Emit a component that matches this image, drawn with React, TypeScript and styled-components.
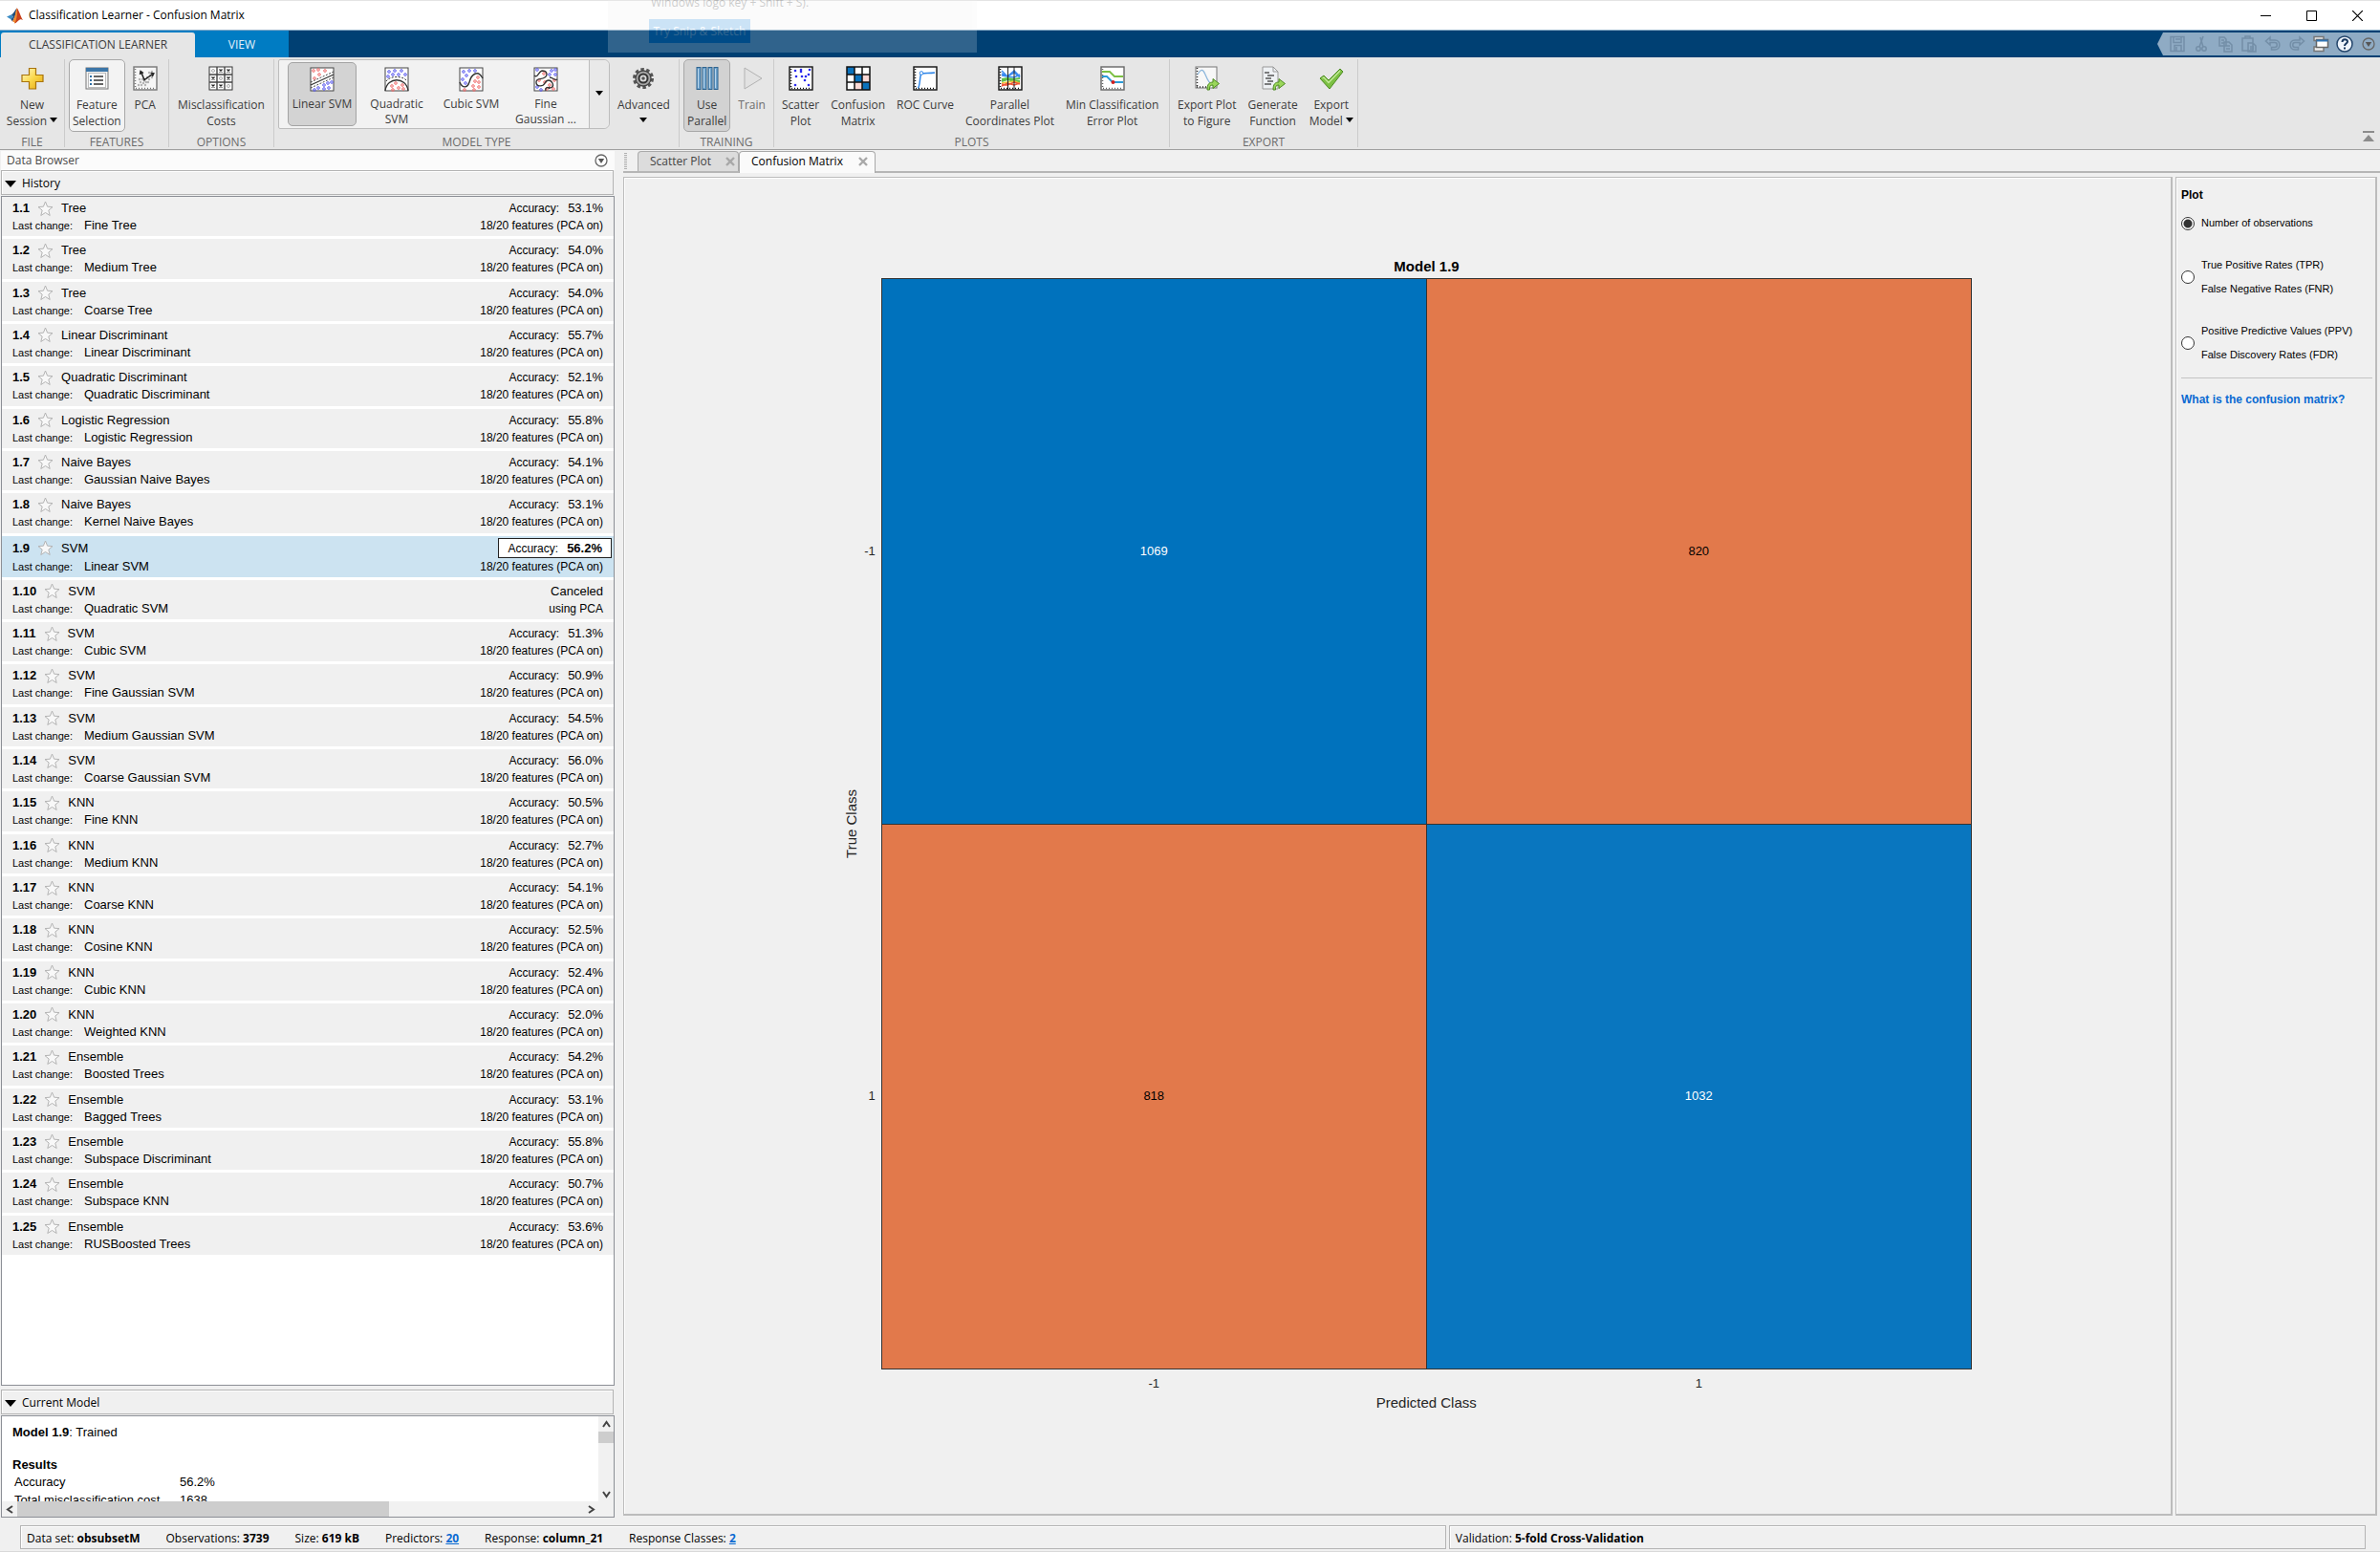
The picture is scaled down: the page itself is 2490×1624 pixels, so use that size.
import React from "react";
import styled, { createGlobalStyle } from "styled-components";

const UI = `"Open Sans", "Noto Sans", sans-serif`;
const ARIAL = `"Liberation Sans", Arial, sans-serif`;

const GlobalStyle = createGlobalStyle`
  *, *::before, *::after { box-sizing: border-box; }
  body { margin: 0; background: #f0f0f0; }
  button { font: inherit; color: inherit; border: 0; background: none; padding: 0; }
  ol, h1, h2, h3, p { margin: 0; padding: 0; font: inherit; }
  svg { display: block; flex: none; }
`;

const Window = styled.div`
  display: flex;
  flex-direction: column;
  height: 100vh;
  overflow: hidden;
  background: #f0f0f0;
  color: #000;
  font: 12px/16px ${UI};
`;

/* ---------- title bar ---------- */
const TitleBar = styled.header`
  display: flex;
  align-items: center;
  height: 32px;
  padding-left: 7px;
  gap: 6px;
  background: #fff;
  border-top: 1px solid #e4e4e4;
  border-bottom: 1px solid #8fafc9;
`;
const Title = styled.h1`
  flex: 1;
  white-space: nowrap;
`;
const CaptionButtons = styled.div`
  display: flex;
`;
const CaptionButton = styled.button`
  display: grid;
  place-items: center;
  width: 48px;
  height: 30px;
`;

/* ---------- tool strip tabs ---------- */
const TabStrip = styled.nav`
  display: flex;
  align-items: stretch;
  justify-content: space-between;
  height: 28px;
  background: #004073;
`;
const TabGroup = styled.div`
  display: flex;
  align-items: flex-end;
  padding-left: 1px;
  background: #007cc3;
`;
const StripTab = styled.button<{ $active?: boolean }>`
  width: ${(p) => (p.$active ? 203 : 98)}px;
  height: 26px;
  border-radius: 3px 3px 0 0;
  background: ${(p) => (p.$active ? "#e6e6e6" : "transparent")};
  color: ${(p) => (p.$active ? "#3c3c3c" : "#e4f1fa")};
`;
const QuickAccess = styled.div`
  display: flex;
  align-items: center;
  margin: 2px 0;
  padding-left: 8px;
  background: #8fabc4;
  clip-path: polygon(6px 0, 100% 0, 100% 100%, 6px 100%, 0 50%);
`;
const QuickButton = styled.button<{ $dim?: boolean }>`
  display: grid;
  place-items: center;
  width: 25px;
  height: 24px;
  opacity: ${(p) => (p.$dim ? 0.5 : 1)};
`;

/* ---------- tool strip ---------- */
const Ribbon = styled.div`
  display: flex;
  height: 97px;
  padding-top: 2px;
  background: #e6e6e6;
  border-bottom: 1px solid #a0a0a0;
  color: #3c3c3c;
`;
const Section = styled.section<{ $width: number }>`
  display: flex;
  flex-direction: column;
  flex: none;
  width: ${(p) => p.$width}px;
  height: 92px;
  border-right: 1px solid #cbcbcb;
`;
const Tools = styled.div<{ $center?: boolean }>`
  display: flex;
  flex: none;
  gap: 4px;
  height: 79px;
  padding: 0 4px;
  justify-content: ${(p) => (p.$center ? "center" : "flex-start")};
`;
const SectionName = styled.h2`
  text-align: center;
  color: #6b6b6b;
`;
const ToolButton = styled.button<{ $look?: "boxed" | "pressed"; $dim?: boolean }>`
  display: flex;
  flex-direction: column;
  align-items: center;
  gap: 6px;
  height: 76px;
  padding: 6px 3px 0;
  line-height: 17px;
  white-space: nowrap;
  border: 1px solid ${(p) => (p.$look ? "#a8a8a8" : "transparent")};
  border-radius: 5px;
  background: ${(p) => (p.$look === "boxed" ? "#f3f3f3" : p.$look === "pressed" ? "#d2d2d2" : "transparent")};
  color: ${(p) => (p.$dim ? "#6e6e6e" : "inherit")};
`;
const Caret = styled.i<{ $alone?: boolean }>`
  display: inline-block;
  margin-left: ${(p) => (p.$alone ? 0 : 3)}px;
  vertical-align: 3px;
  border: 4px solid transparent;
  border-top: 5px solid #000;
  border-bottom: 0;
`;
const Gallery = styled.div`
  display: flex;
  height: 73px;
  width: 347px;
  flex: none;
  border: 1px solid #bdbdbd;
  border-radius: 2px 6px 6px 2px;
  background: #f2f2f2;
`;
const GalleryItems = styled.div`
  display: flex;
  flex: 1;
  gap: 6px;
  padding: 2px 0 0 9px;
`;
const GalleryItem = styled.button<{ $on?: boolean }>`
  display: flex;
  flex-direction: column;
  align-items: center;
  gap: 5px;
  width: 72px;
  height: 67px;
  padding-top: 4px;
  line-height: 16px;
  border: 1px solid ${(p) => (p.$on ? "#a4a4a4" : "transparent")};
  border-radius: 5px;
  background: ${(p) => (p.$on ? "#d3d3d3" : "transparent")};
  white-space: nowrap;
`;
const GalleryMore = styled.button`
  width: 21px;
  border-left: 1px solid #bdbdbd;
  border-radius: 0 6px 6px 0;
  background: #e9e9e9;
`;
const Minimize = styled.button`
  align-self: flex-end;
  margin: 0 6px 8px auto;
`;

/* ---------- body ---------- */
const Body = styled.main`
  display: flex;
  flex: 1;
  min-height: 0;
  padding-top: 1px;
`;
const Browser = styled.aside`
  display: flex;
  flex-direction: column;
  flex: none;
  width: 643px;
  padding-bottom: 7px;
`;
const BrowserHead = styled.div`
  display: flex;
  align-items: center;
  justify-content: space-between;
  height: 20px;
  margin-left: 1px;
  padding: 0 7px 0 6px;
  background: #fbfbfb;
  color: #4a4a4a;
`;
const GroupHead = styled.h2`
  display: flex;
  align-items: center;
  gap: 6px;
  flex: none;
  height: 26px;
  margin: 0 1px 1px;
  padding: 2px 0 0 3px;
  border: 1px solid #b4b4b4;
  box-shadow: inset 1px 1px #fff;
`;
const Disclosure = styled.i`
  border: 6px solid transparent;
  border-top: 7px solid #000;
  border-bottom: 0;
`;
const HistoryBox = styled.div`
  flex: 1;
  min-height: 0;
  margin: 0 0 4px 1px;
  border: 1px solid #8c8f96;
  background: #fff;
  overflow: hidden;
`;
const HistoryList = styled.ol`
  display: flex;
  flex-direction: column;
  gap: 3px;
  min-height: 1107px;
  list-style: none;
  font-family: ${ARIAL};
`;
const Entry = styled.li<{ $selected?: boolean }>`
  flex: 1 1 auto;
  padding: 3px 11px 2px;
  background: ${(p) => (p.$selected ? "#cce3f1" : "#f0f0f0")};
`;
const EntryLine = styled.div<{ $tall?: boolean }>`
  display: flex;
  align-items: center;
  justify-content: space-between;
  height: ${(p) => (p.$tall ? 20 : 18)}px;
`;
const Side = styled.span<{ $gap: number }>`
  display: flex;
  align-items: center;
  gap: ${(p) => p.$gap}px;
`;
const Small = styled.span`
  font-size: 11px;
`;
const Label = styled.span`
  font-size: 12px;
`;
const Value = styled.span<{ $bold?: boolean }>`
  font-size: 13px;
  font-weight: ${(p) => (p.$bold ? 700 : 400)};
`;
const BestScore = styled.span`
  display: flex;
  align-items: center;
  gap: 9px;
  height: 21px;
  margin-right: -9px;
  padding: 0 9px;
  border: 1px solid #222;
  background: #fff;
`;

const ModelBox = styled.div`
  display: grid;
  grid-template: 1fr 16px / 1fr 16px;
  flex: none;
  height: 107px;
  margin-left: 1px;
  border: 1px solid #8c8f96;
  background: #fff;
`;
const ModelText = styled.div`
  overflow: hidden;
  padding: 8px 11px 0;
  font: 13px/17px ${ARIAL};
`;
const ResultsTitle = styled.h3`
  margin-top: 17px;
  font-weight: 700;
`;
const Results = styled.table`
  border-spacing: 0;
  line-height: 19px;
  th, td { padding: 0 0 0 2px; font-weight: 400; text-align: left; }
  th { width: 173px; }
`;
const ScrollBar = styled.div<{ $across?: boolean }>`
  display: flex;
  flex-direction: ${(p) => (p.$across ? "row" : "column")};
  background: #f1f1f1;
`;
const ScrollArrow = styled.button`
  display: grid;
  place-items: center;
  width: 16px;
  height: 16px;
`;
const Thumb = styled.div<{ $across?: boolean }>`
  flex: none;
  width: ${(p) => (p.$across ? "389px" : "16px")};
  height: ${(p) => (p.$across ? "16px" : "12px")};
  background: #cdcdcd;
`;
const Spacer = styled.div`
  flex: 1;
`;

/* ---------- documents ---------- */
const Documents = styled.section`
  display: flex;
  flex-direction: column;
  flex: 1;
  min-width: 0;
  padding: 0 3px 9px 9px;
`;
const DocTabs = styled.div`
  display: flex;
  height: 23px;
  margin-right: -3px;
  border-bottom: 2px solid #b6b6b6;
`;
const Grip = styled.i`
  width: 3px;
  height: 17px;
  margin: 2px 11px 0 1px;
  background: repeating-linear-gradient(#b0b0b0 0 1px, transparent 1px 2px);
`;
const DocTab = styled.div<{ $active?: boolean }>`
  display: flex;
  align-items: center;
  justify-content: space-between;
  width: ${(p) => (p.$active ? 143 : 106)}px;
  height: ${(p) => (p.$active ? 23 : 21)}px;
  padding: 0 ${(p) => (p.$active ? "7px 2px" : "3px 0")} 12px;
  border: 1px solid #a9a9a9;
  border-bottom: 0;
  border-radius: 4px 4px 0 0;
  background: ${(p) => (p.$active ? "#fafafa" : "#dcdcdc")};
  color: ${(p) => (p.$active ? "#000" : "#444")};
`;
const Panes = styled.div`
  display: flex;
  flex: 1;
  min-height: 0;
  gap: 3px;
  margin-top: 4px;
`;
const PlotPane = styled.div`
  display: flex;
  align-items: center;
  justify-content: center;
  flex: 1;
  padding: 0 0 26px 19px;
  border: 1px solid #bcbcbc;
  border-right-width: 2px;
  border-bottom-width: 2px;
  box-shadow: inset 1px 1px #fff;
`;
const Matrix = styled.table`
  border-collapse: collapse;
  font: 13px/16px ${ARIAL};
  color: #262626;
  th, td { padding: 0; font-weight: 400; }
`;
const MatrixTitle = styled.caption`
  font: 700 15px/25px ${ARIAL};
  color: #000;
  padding-left: 42px;
`;
const Cell = styled.td<{ $hit?: boolean; $tone?: string }>`
  width: 35.1vh;
  height: 35.1vh;
  text-align: center;
  border: 1px solid #333;
  background: ${(p) => p.$tone};
  color: ${(p) => (p.$hit ? "#fff" : "#000")};
`;
const AxisSide = styled.th`
  width: 22px;
  font-size: 15px !important;
  div { width: 22px; line-height: 22px; writing-mode: vertical-rl; transform: rotate(180deg); margin: 0 auto; }
`;
const RowTick = styled.th`
  width: 20px;
  padding-right: 6px !important;
  text-align: right;
`;
const ColTick = styled.th`
  height: 25px;
  padding: 7px 0 2px !important;
`;
const AxisBottom = styled.th`
  height: 20px;
  font-size: 15px;
`;

const OptionsPane = styled.fieldset`
  flex: none;
  width: 211px;
  min-width: 0;
  margin: 0;
  padding: 10px 3px 0 5px;
  border: 1px solid #bcbcbc;
  border-right-width: 2px;
  border-bottom-width: 2px;
  box-shadow: inset 1px 1px #fff;
  font: 11px/25px ${ARIAL};
`;
const OptionsTitle = styled.h2`
  margin-bottom: 9px;
  font-size: 12px;
  line-height: 16px;
  font-weight: 700;
`;
const Option = styled.label`
  display: flex;
  align-items: center;
  gap: 7px;
  margin-bottom: 19px;
  white-space: nowrap;
`;
const Radio = styled.input`
  appearance: none;
  flex: none;
  width: 14px;
  height: 14px;
  margin: 0;
  border: 1px solid #333;
  border-radius: 50%;
  background: #fff;
  &:checked { background: radial-gradient(#333 0 4px, #fff 5px); }
`;
const Rule = styled.hr`
  margin: -8px 0 14px;
  border: 0;
  border-top: 1px solid #c4c4c4;
`;
const HelpLink = styled.a`
  display: block;
  font-size: 12px;
  line-height: 16px;
  font-weight: 700;
  color: #0a6ad2;
  text-decoration: none;
`;

/* ---------- status bar ---------- */
const StatusBar = styled.footer`
  display: flex;
  gap: 3px;
  height: 29px;
  padding: 1px 15px 2px 21px;
  border-bottom: 1px solid #d9d9d9;
`;
const StatusBox = styled.div<{ $grow: number }>`
  display: flex;
  align-items: center;
  flex: ${(p) => p.$grow} 1 0;
  gap: 27px;
  height: 25px;
  padding: 2px 0 0 6px;
  border: 1px solid #b4b4b4;
  box-shadow: inset 1px 1px #fff;
  white-space: nowrap;
  a { color: #0a6ad2; }
`;

/* ---------- fading notification ---------- */
const Toast = styled.div`
  position: absolute;
  top: 0;
  left: 636px;
  width: 386px;
  height: 55px;
  padding-left: 43px;
  overflow: hidden;
  opacity: 0.2;
  background: #f0f0f0;
  pointer-events: none;
  font: 12px/16px ${UI};
  p { margin: -5px 0 9px 2px; }
  button { width: 106px; height: 25px; background: #0078d7; color: #fff; }
`;

/* ---------- icons ---------- */
type Kids = { children: React.ReactNode; size?: number };
const Ico = ({ children, size = 26 }: Kids) => (
  <svg width={size} height={size} viewBox="0 0 26 26" fill="none" aria-hidden="true">{children}</svg>
);
const Dots = ({ pts, color, r = 1.3 }: { pts: number[][]; color: string; r?: number }) => (
  <g stroke={color} strokeWidth="1">{pts.map(([x, y], i) => <circle key={i} cx={x} cy={y} r={r} />)}</g>
);
const Frame = ({ dark = "#444" }: { dark?: string }) => (
  <rect x="1" y="1" width="24" height="24" fill="#fff" stroke={dark} />
);
const Ticked = ({ dark = "#111", fill = "#fff" }: { dark?: string; fill?: string }) => (
  <>
    <rect x="1" y="1" width="24" height="24" fill={fill} stroke={dark} strokeWidth="1.4" />
    <path d="M2.5 3v21M3 23.5h21" stroke={dark} strokeWidth="1.6" strokeDasharray="1 2" />
  </>
);
const RED = "#f06a6a";
const BLUE = "#5a5af0";
const GREEN = "#7cc043";

const Logo = () => (
  <svg width="17" height="17" viewBox="0 0 17 17" aria-hidden="true">
    <path d="M0 9.5 5 7.3l2 2.2-2.6 2.8z" fill="#3c8dc5" />
    <path d="M5 7.3C7 6.5 8.5 3 10.5.5L9 8l-3 6.5-1.6-2.2L7 9.5z" fill="#1f4e79" />
    <path d="M10.5.5C12.500 1 14.500 10 17 13c-2-1.500-3.500-.8-5 .8-1 1.200-2 2.200-3.500 2.700C8 15 7 14 6 14.500 9 11 9.500 4 10.500.5z" fill="#c8401c" />
    <path d="M10.500.5C11.500 4 11 11 8.500 16.500 8 15 7 14 6 14.500 9 11 9.500 4 10.500.5z" fill="#f08c2e" />
  </svg>
);
const PlusIcon = () => (
  <Ico>
    <defs><linearGradient id="gold" x1="0" y1="0" x2="1" y2="1"><stop offset="0" stopColor="#fffbd0" /><stop offset=".5" stopColor="#fbd84b" /><stop offset="1" stopColor="#e3a50f" /></linearGradient></defs>
    <path d="M9.500 2.500h7v7h7.500v7h-7.500v7.500h-7v-7.500H2v-7h7.500z" fill="url(#gold)" stroke="#a8730c" strokeWidth="1.200" />
  </Ico>
);
const ListIcon = () => (
  <Ico>
    <rect x="2" y="2" width="23" height="22" fill="#f4f4f4" stroke="#777" />
    <rect x="2" y="2" width="23" height="4" fill="#3c76a8" />
    <rect x="4.500" y="7.500" width="18" height="15" fill="#fff" stroke="#bbb" />
    <path d="M10 11h10M10 15h10M10 19h10" stroke="#333" strokeWidth="1.500" />
    <path d="M6 11h2M6 15h2M6 19h2" stroke="#2b6ca3" strokeWidth="2" />
  </Ico>
);
const PcaIcon = () => (
  <Ico>
    <Ticked dark="#777" fill="#f6f6f6" />
    <g fill="#b4b4b4">{[[6, 20], [8, 17], [9, 20], [11, 18], [12, 15.500], [14, 17], [10, 14], [15, 12], [17, 14], [18, 10], [20, 12], [7, 14], [13, 20], [16, 17], [20, 6], [17, 7]].map(([x, y], i) => <circle key={i} cx={x} cy={y} r="1.200" />)}</g>
    <path d="M21.500 8 12 14.500 8.500 6M7.500 9l.6-3.500L11 7.500M18.500 7.500l3.300.3-1.500 3" stroke="#222" strokeWidth="1.500" />
  </Ico>
);
const CostsIcon = () => (
  <Ico>
    <Frame dark="#333" />
    <path d="M9 1v24M17 1v24M1 9h24M1 17h24" stroke="#444" strokeWidth="1.400" />
    <path d="m11.500 3.500 3 3m0-3-3 3M19.500 3.500l3 3m0-3-3 3M3.500 11.500l3 3m0-3-3 3M19.500 11.500l3 3m0-3-3 3M3.500 19.500l3 3m0-3-3 3M11.500 19.500l3 3m0-3-3 3" stroke="#222" strokeWidth="1.300" />
    <Dots pts={[[5, 5], [13, 13], [21, 21]]} color="#aaa" r={1.5} />
  </Ico>
);
const LinearIcon = () => (
  <Ico>
    <Frame />
    <Dots color={RED} pts={[[4, 4], [10, 8], [5, 12], [9, 3], [16, 4]]} />
    <Dots color={BLUE} pts={[[23, 16], [19, 17], [15, 19], [9, 22], [5, 24], [15, 23], [20, 22]]} />
    <path d="M1 19 25 8" stroke="#333" strokeWidth="1.300" />
    <path d="M1 16 25 5M1 22 25 11" stroke="#444" strokeDasharray="2 1.500" />
  </Ico>
);
const QuadraticIcon = () => (
  <Ico>
    <Frame />
    <Dots color={BLUE} pts={[[5, 5], [11, 4], [18, 4], [4, 10], [9, 8], [15, 8], [22, 8]]} />
    <Dots color={RED} pts={[[8, 20], [12, 17], [15, 22], [19, 19], [9, 24], [20, 23]]} />
    <path d="M1 25c2-15 22-15 24 0" stroke="#333" strokeWidth="1.300" />
    <path d="M2 15c4-6 18-6 22 0" stroke="#333" strokeDasharray="2 1.500" />
  </Ico>
);
const CubicIcon = () => (
  <Ico>
    <Frame />
    <Dots color={BLUE} pts={[[5, 5], [11, 4], [8, 9], [4, 13], [17, 4], [7, 17]]} />
    <Dots color={RED} pts={[[20, 11], [17, 15], [21, 16], [15, 20], [21, 21], [6, 24], [16, 24]]} />
    <path d="M1 16c3 7 8 6 10 0 2-8 9-14 14-4" stroke="#333" strokeWidth="1.400" />
  </Ico>
);
const GaussianIcon = () => (
  <Ico>
    <Frame />
    <Dots color={BLUE} pts={[[4, 3], [19, 4], [23, 8], [17, 8], [4, 21], [8, 24], [23, 3]]} />
    <Dots color={RED} pts={[[11, 7], [6, 14], [12, 16], [22, 14], [17, 19], [14, 23], [21, 23]]} />
    <path d="M1 9c4 3 4-4 8-5 6 0 6 5 3 7-4 3-9 0-9 5s7 5 9 1 6-4 8 0-2 6-4 4M17 11c4 0 5 4 8 2M13 25c-1-3 2-5 4-2" stroke="#333" strokeWidth="1.300" />
  </Ico>
);
const GearIcon = () => (
  <Ico>
    <circle cx="13" cy="13" r="9.500" stroke="#555" strokeWidth="3" strokeDasharray="3.500 2.470" />
    <circle cx="13" cy="13" r="8" fill="#a8a8a8" stroke="#444" strokeWidth="1.300" />
    <circle cx="13" cy="13" r="4.500" fill="#ddd" stroke="#333" strokeWidth="2" />
    <circle cx="13" cy="13" r="1.800" fill="#555" />
  </Ico>
);
const BarsIcon = () => (
  <Ico>
    {[2, 8, 14, 20].map((x) => <g key={x}><rect x={x} y="1.500" width="4" height="23" fill="#6fa3cd" stroke="#2f648f" /><path d={`M${x + 1.5} 3v20`} stroke="#b8d6ec" /></g>)}
  </Ico>
);
const PlayIcon = () => <Ico><path d="M5 2 23 13 5 24z" fill="#e2e2e2" stroke="#b2b2b2" /></Ico>;
const ScatterIcon = () => (
  <Ico>
    <Ticked />
    <g fill="#2b2bee">{[[7, 5], [13, 6], [8, 11], [14, 11], [18, 11], [21, 9], [13, 4], [17, 15], [7, 20], [21, 20], [22, 4]].map(([x, y], i) => <circle key={i} cx={x} cy={y} r="1.300" />)}</g>
  </Ico>
);
const MatrixIcon = () => (
  <Ico>
    <rect x="1" y="1" width="24" height="24" fill="#fff" />
    <path d="M1 1h8v8H1zM9 9h8v8H9zM17 17h8v8h-8z" fill="#0a72bd" />
    <path d="M17 9h8v8h-8zM9 17h8v8H9z" fill="#fbd9d6" />
    <path d="M1 1h24v24H1zM9 1v24M17 1v24M1 9h24M1 17h24" stroke="#111" strokeWidth="1.500" />
  </Ico>
);
const RocIcon = () => (
  <Ico><Ticked /><path d="M5 23c3 0 2-14 4-15 3-1 9 0 14-1" stroke="#2f86e8" strokeWidth="1.500" /><circle cx="9" cy="7.500" r="1.800" fill="#fff" stroke="#2f86e8" /></Ico>
);
const ParallelIcon = () => (
  <Ico>
    <Ticked />
    <path d="m4 5 6 6 7-6 6 6M4 8l6 3 7-4 6 5M4 10l6 1 7 1 6-3" stroke="#3a8af0" strokeWidth="1.500" />
    <path d="m4 14 6-1 7 1 6-1M4 16l6-2 7 2 6 0" stroke="#5cc04a" strokeWidth="2" />
    <path d="m4 18 6-1 7-1 6 2" stroke="#f3c93a" strokeWidth="1.500" />
    <path d="m4 19 6 1 7-3 6 2M4 21l6-3 7 2 6-2" stroke="#ee5436" strokeWidth="1.500" />
    <path d="M10.500 1v24M17 1v24" stroke="#222" />
  </Ico>
);
const MinErrorIcon = () => (
  <Ico>
    <Ticked dark="#666" />
    <path d="M2 6h8l5 5h9" stroke={GREEN} strokeWidth="1.800" />
    <path d="M2 11h5l6 6h11" stroke="#2a9bd8" strokeWidth="1.800" />
    <circle cx="13.500" cy="17" r="2" fill="#d02020" />
  </Ico>
);
const GreenArrow = () => <path d="M13 25c0-6 2-8 6-8v-3.500l6.500 5-6.500 5V20c-3 0-4 1.500-3.500 5z" fill="#9ad65a" stroke="#4d8a22" />;
const ExportPlotIcon = () => (
  <Ico><rect x="1" y="1" width="22" height="22" fill="#f7f7f7" stroke="#777" /><path d="M2.500 2v21M2 22h14" stroke="#222" strokeWidth="1.500" strokeDasharray="1 2" /><path d="M3 9c4-7 6-5 8 0s4 10 8 11" stroke="#8fb8dc" strokeWidth="1.300" /><GreenArrow /></Ico>
);
const GenerateIcon = () => (
  <Ico><path d="M2 1h11l5 5v18H2z" fill="#eef1f4" stroke="#999" /><path d="M13 1v5h5" stroke="#999" /><path d="M4 7h5M7 10h7M5 13h6M7 16h6M4 19h7" stroke="#555" strokeWidth="1.300" /><GreenArrow /></Ico>
);
const CheckIcon = () => (
  <Ico><path d="m1 13 4-3 5 5L22 3l3 3-14 18z" fill={GREEN} stroke="#4d8a22" /><path d="m3.500 13 1.500-1 5 5.500L22 5" stroke="#c5ea9c" strokeWidth="1.300" /></Ico>
);
const Star = () => (
  <svg width="17" height="17" viewBox="0 0 17 17" aria-hidden="true"><path d="m8.500 1 2.100 5.200 5.400.4-4.200 3.500 1.400 5.400-4.700-3-4.700 3 1.400-5.400L1 6.600l5.400-.4z" fill="#f8f8f8" stroke="#b4b4b4" /></svg>
);
const CloseX = () => <svg width="10" height="10" viewBox="0 0 10 10"><path d="m1 1 8 8m0-8-8 8" stroke="#a8a8a8" strokeWidth="2.400" /></svg>;
const CircleDown = ({ fill = "none" }: { fill?: string }) => (
  <svg width="14" height="14" viewBox="0 0 14 14"><circle cx="7" cy="7" r="6" fill={fill} stroke="#666" strokeWidth="1.300" /><path d="M3.800 5h6.400L7 10z" fill="#555" /></svg>
);
const Chevron = ({ d }: { d: string }) => (
  <svg width="9" height="9" viewBox="0 0 9 9" fill="none"><path d={d} stroke="#444" strokeWidth="2" /></svg>
);

const Q = ({ children }: { children: React.ReactNode }) => (
  <svg width="18" height="18" viewBox="0 0 18 18" fill="none" stroke="#59738c" strokeWidth="1.500">{children}</svg>
);
const quick: { name: string; dim?: boolean; icon: React.ReactNode }[] = [
  { name: "Save", dim: true, icon: <Q><path d="M2 1.500h14v15H2zM5 1.500v6h8v-6M6 16.500v-6h7v6M8 12v4M7 4h5" /></Q> },
  { name: "Cut", dim: true, icon: <Q><path d="m11 1-4 11M8 2l3 10" /><circle cx="6" cy="14" r="2.200" /><circle cx="12" cy="14" r="2.200" /></Q> },
  { name: "Copy", dim: true, icon: <Q><path d="M3 2h5l2 2v7H3zM8 7h5l3 3v7H8zM5 5h3M5 8h3M10 11h4M10 14h4" /></Q> },
  { name: "Paste", dim: true, icon: <Q><path d="M2 3h11v13H2zM5 3V1h5v2M8 8h5l3 3v6H8zM10 12h4M10 14h4" /></Q> },
  { name: "Undo", dim: true, icon: <Q><path d="M6 2 1.500 6 6 10V7.500h5c3 0 3 5 0 5H7.500v2.500H11c6.500 0 6.500-10 0-10H6z" /></Q> },
  { name: "Redo", dim: true, icon: <Q><path d="m12 2 4.500 4-4.500 4V7.500H7c-3 0-3 5 0 5h3.500v2.500H7c-6.500 0-6.500-10 0-10h5z" /></Q> },
  { name: "Switch windows", icon: <Q><path d="M2 1.500h10v4H2zM2 12h10v4.500H2z" fill="#eee" stroke="#777" /><rect x="4.500" y="4.500" width="12" height="8" fill="#fff" stroke="#666" /><path d="M4.500 5.500h12" stroke="#2f74b5" strokeWidth="2" /></Q> },
  { name: "Help", icon: <Q><circle cx="9" cy="9" r="8" fill="#eef4fb" stroke="#23456b" /><path d="M6.500 7c0-3.500 5.500-3.500 5.500-.5 0 2-3 2-3 4.500" stroke="#17375e" strokeWidth="2" /><path d="M9 12.500v2" stroke="#17375e" strokeWidth="2" /></Q> },
  { name: "More", icon: <CircleDown /> },
];

/* ---------- data ---------- */
const models: [string, string, string][] = [
  ["Tree", "Fine Tree", "53.1%"],
  ["Tree", "Medium Tree", "54.0%"],
  ["Tree", "Coarse Tree", "54.0%"],
  ["Linear Discriminant", "Linear Discriminant", "55.7%"],
  ["Quadratic Discriminant", "Quadratic Discriminant", "52.1%"],
  ["Logistic Regression", "Logistic Regression", "55.8%"],
  ["Naive Bayes", "Gaussian Naive Bayes", "54.1%"],
  ["Naive Bayes", "Kernel Naive Bayes", "53.1%"],
  ["SVM", "Linear SVM", "56.2%"],
  ["SVM", "Quadratic SVM", ""],
  ["SVM", "Cubic SVM", "51.3%"],
  ["SVM", "Fine Gaussian SVM", "50.9%"],
  ["SVM", "Medium Gaussian SVM", "54.5%"],
  ["SVM", "Coarse Gaussian SVM", "56.0%"],
  ["KNN", "Fine KNN", "50.5%"],
  ["KNN", "Medium KNN", "52.7%"],
  ["KNN", "Coarse KNN", "54.1%"],
  ["KNN", "Cosine KNN", "52.5%"],
  ["KNN", "Cubic KNN", "52.4%"],
  ["KNN", "Weighted KNN", "52.0%"],
  ["Ensemble", "Boosted Trees", "54.2%"],
  ["Ensemble", "Bagged Trees", "53.1%"],
  ["Ensemble", "Subspace Discriminant", "55.8%"],
  ["Ensemble", "Subspace KNN", "50.7%"],
  ["Ensemble", "RUSBoosted Trees", "53.6%"],
];
const SELECTED = 8;

type ToolProps = { icon: React.ReactNode; lines: string[]; caret?: boolean; look?: "boxed" | "pressed"; dim?: boolean };
const Tool = ({ icon, lines, caret, look, dim }: ToolProps) => (
  <ToolButton $look={look} $dim={dim}>
    {icon}
    <span>
      {lines[0]}
      {lines.length > 1 && <><br />{lines[1]}</>}
      {caret && <Caret $alone={lines[1] === ""} />}
    </span>
  </ToolButton>
);

const HistoryEntry = ({ index }: { index: number }) => {
  const [family, preset, accuracy] = models[index];
  const selected = index === SELECTED;
  return (
    <Entry $selected={selected}>
      <EntryLine $tall={selected}>
        <Side $gap={8}>
          <Value $bold>1.{index + 1}</Value>
          <Star />
          <Value>{family}</Value>
        </Side>
        {selected ? (
          <BestScore><Label>Accuracy:</Label><Value $bold>{accuracy}</Value></BestScore>
        ) : accuracy ? (
          <Side $gap={9}><Label>Accuracy:</Label><Value>{accuracy}</Value></Side>
        ) : (
          <Value>Canceled</Value>
        )}
      </EntryLine>
      <EntryLine>
        <Side $gap={12}><Small>Last change:</Small><Value>{preset}</Value></Side>
        <Label>{accuracy ? "18/20 features (PCA on)" : "using PCA"}</Label>
      </EntryLine>
    </Entry>
  );
};

export default function App() {
  return (
    <Window>
      <GlobalStyle />
      <TitleBar>
        <Logo />
        <Title>Classification Learner - Confusion Matrix</Title>
        <CaptionButtons>
          <CaptionButton aria-label="Minimize"><svg width="11" height="11"><path d="M0 5.500h11" stroke="#000" /></svg></CaptionButton>
          <CaptionButton aria-label="Maximize"><svg width="11" height="11"><path d="M.5.5h10v10H.5z" fill="none" stroke="#000" /></svg></CaptionButton>
          <CaptionButton aria-label="Close"><svg width="11" height="11"><path d="m0 0 11 11M11 0 0 11" stroke="#000" strokeWidth="1.200" /></svg></CaptionButton>
        </CaptionButtons>
      </TitleBar>

      <TabStrip>
        <TabGroup>
          <StripTab $active>CLASSIFICATION LEARNER</StripTab>
          <StripTab>VIEW</StripTab>
        </TabGroup>
        <QuickAccess>
          {quick.map((q) => <QuickButton key={q.name} aria-label={q.name} $dim={q.dim}>{q.icon}</QuickButton>)}
        </QuickAccess>
      </TabStrip>

      <Ribbon>
        <Section $width={68}>
          <Tools $center><Tool icon={<PlusIcon />} lines={["New", "Session"]} caret /></Tools>
          <SectionName>FILE</SectionName>
        </Section>
        <Section $width={109}>
          <Tools>
            <Tool icon={<ListIcon />} lines={["Feature", "Selection"]} look="boxed" />
            <Tool icon={<PcaIcon />} lines={["PCA"]} />
          </Tools>
          <SectionName>FEATURES</SectionName>
        </Section>
        <Section $width={110}>
          <Tools $center><Tool icon={<CostsIcon />} lines={["Misclassification", "Costs"]} /></Tools>
          <SectionName>OPTIONS</SectionName>
        </Section>
        <Section $width={424}>
          <Tools>
            <Gallery>
              <GalleryItems>
                <GalleryItem $on><LinearIcon /><span>Linear SVM</span></GalleryItem>
                <GalleryItem><QuadraticIcon /><span>Quadratic<br />SVM</span></GalleryItem>
                <GalleryItem><CubicIcon /><span>Cubic SVM</span></GalleryItem>
                <GalleryItem><GaussianIcon /><span>Fine<br />Gaussian ...</span></GalleryItem>
              </GalleryItems>
              <GalleryMore aria-label="More model types"><Caret $alone /></GalleryMore>
            </Gallery>
            <Tool icon={<GearIcon />} lines={["Advanced", ""]} caret />
          </Tools>
          <SectionName>MODEL TYPE</SectionName>
        </Section>
        <Section $width={99}>
          <Tools>
            <Tool icon={<BarsIcon />} lines={["Use", "Parallel"]} look="pressed" />
            <Tool icon={<PlayIcon />} lines={["Train"]} dim />
          </Tools>
          <SectionName>TRAINING</SectionName>
        </Section>
        <Section $width={414}>
          <Tools>
            <Tool icon={<ScatterIcon />} lines={["Scatter", "Plot"]} />
            <Tool icon={<MatrixIcon />} lines={["Confusion", "Matrix"]} />
            <Tool icon={<RocIcon />} lines={["ROC Curve"]} />
            <Tool icon={<ParallelIcon />} lines={["Parallel", "Coordinates Plot"]} />
            <Tool icon={<MinErrorIcon />} lines={["Min Classification", "Error Plot"]} />
          </Tools>
          <SectionName>PLOTS</SectionName>
        </Section>
        <Section $width={197}>
          <Tools>
            <Tool icon={<ExportPlotIcon />} lines={["Export Plot", "to Figure"]} />
            <Tool icon={<GenerateIcon />} lines={["Generate", "Function"]} />
            <Tool icon={<CheckIcon />} lines={["Export", "Model"]} caret />
          </Tools>
          <SectionName>EXPORT</SectionName>
        </Section>
        <Minimize aria-label="Minimize toolstrip"><svg width="12" height="11"><path d="M0 0h12v2H0zM6 4l6 7H0z" fill="#8c8c8c" /></svg></Minimize>
      </Ribbon>

      <Body>
        <Browser>
          <BrowserHead>Data Browser<button aria-label="Data browser menu"><CircleDown fill="#fff" /></button></BrowserHead>
          <GroupHead><Disclosure />History</GroupHead>
          <HistoryBox>
            <HistoryList>{models.map((_, i) => <HistoryEntry key={i} index={i} />)}</HistoryList>
          </HistoryBox>
          <GroupHead><Disclosure />Current Model</GroupHead>
          <ModelBox>
            <ModelText>
              <p><b>Model 1.9</b>: Trained</p>
              <ResultsTitle>Results</ResultsTitle>
              <Results>
                <tbody>
                  <tr><th scope="row">Accuracy</th><td>56.2%</td></tr>
                  <tr><th scope="row">Total misclassification cost</th><td>1638</td></tr>
                </tbody>
              </Results>
            </ModelText>
            <ScrollBar>
              <ScrollArrow aria-label="Scroll up"><Chevron d="M1 7l3.500-5L8 7" /></ScrollArrow>
              <Thumb />
              <Spacer />
              <ScrollArrow aria-label="Scroll down"><Chevron d="M1 2l3.500 5L8 2" /></ScrollArrow>
            </ScrollBar>
            <ScrollBar $across>
              <ScrollArrow aria-label="Scroll left"><Chevron d="M7 1 2 4.500 7 8" /></ScrollArrow>
              <Thumb $across />
              <Spacer />
              <ScrollArrow aria-label="Scroll right"><Chevron d="M2 1l5 3.500L2 8" /></ScrollArrow>
            </ScrollBar>
            <ScrollBar />
          </ModelBox>
        </Browser>

        <Documents>
          <DocTabs>
            <Grip />
            <DocTab>Scatter Plot<button aria-label="Close Scatter Plot"><CloseX /></button></DocTab>
            <DocTab $active>Confusion Matrix<button aria-label="Close Confusion Matrix"><CloseX /></button></DocTab>
          </DocTabs>
          <Panes>
            <PlotPane>
              <Matrix>
                <MatrixTitle>Model 1.9</MatrixTitle>
                <tbody>
                  <tr>
                    <AxisSide rowSpan={2}><div>True Class</div></AxisSide>
                    <RowTick>-1</RowTick>
                    <Cell $hit $tone="#0072bd">1069</Cell>
                    <Cell $tone="#e2794b">820</Cell>
                  </tr>
                  <tr>
                    <RowTick>1</RowTick>
                    <Cell $tone="#e2794b">818</Cell>
                    <Cell $hit $tone="#0976bf">1032</Cell>
                  </tr>
                </tbody>
                <tfoot>
                  <tr><td colSpan={2} /><ColTick>-1</ColTick><ColTick>1</ColTick></tr>
                  <tr><td colSpan={2} /><AxisBottom colSpan={2}>Predicted Class</AxisBottom></tr>
                </tfoot>
              </Matrix>
            </PlotPane>
            <OptionsPane>
              <OptionsTitle>Plot</OptionsTitle>
              <Option><Radio type="radio" name="plot" defaultChecked />Number of observations</Option>
              <Option><Radio type="radio" name="plot" /><span>True Positive Rates (TPR)<br />False Negative Rates (FNR)</span></Option>
              <Option><Radio type="radio" name="plot" /><span>Positive Predictive Values (PPV)<br />False Discovery Rates (FDR)</span></Option>
              <Rule />
              <HelpLink href="#help">What is the confusion matrix?</HelpLink>
            </OptionsPane>
          </Panes>
        </Documents>
      </Body>

      <StatusBar>
        <StatusBox $grow={1493}>
          <span>Data set: <b>obsubsetM</b></span>
          <span>Observations: <b>3739</b></span>
          <span>Size: <b>619 kB</b></span>
          <span>Predictors: <a href="#predictors"><b>20</b></a></span>
          <span>Response: <b>column_21</b></span>
          <span>Response Classes: <a href="#classes"><b>2</b></a></span>
        </StatusBox>
        <StatusBox $grow={957}>
          <span>Validation: <b>5-fold Cross-Validation</b></span>
        </StatusBox>
      </StatusBar>

      <Toast>
        <p>Windows logo key + Shift + S).</p>
        <button tabIndex={-1}>Try Snip &amp; Sketch</button>
      </Toast>
    </Window>
  );
}
